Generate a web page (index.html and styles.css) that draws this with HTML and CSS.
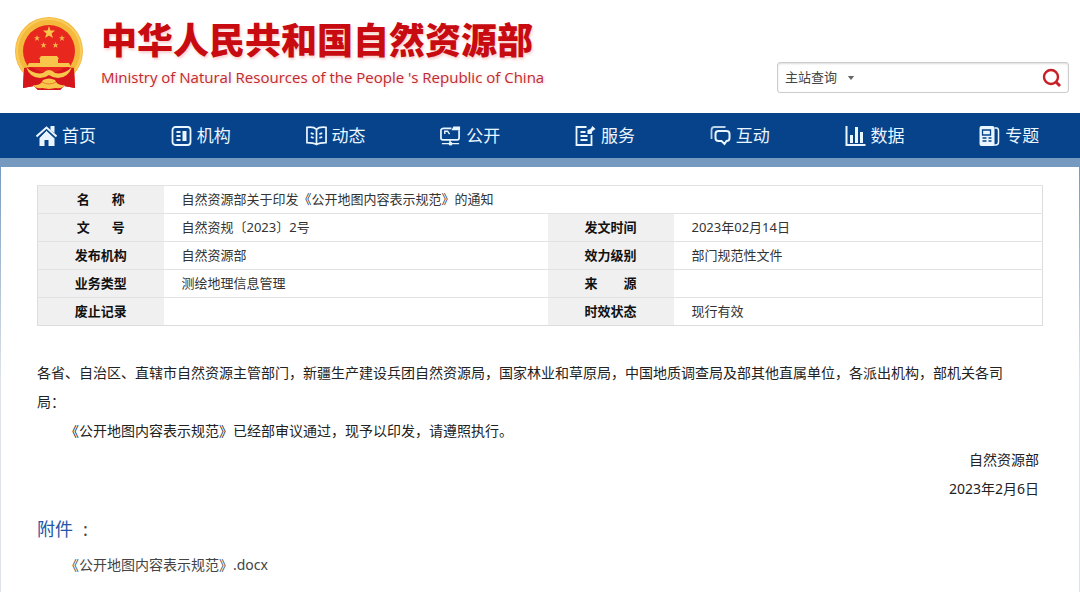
FILE: index.html
```html
<!DOCTYPE html>
<html lang="zh-CN">
<head>
<meta charset="utf-8">
<meta name="viewport" content="width=device-width, initial-scale=1">
<title>自然资源部关于印发《公开地图内容表示规范》的通知</title>
<link rel="stylesheet" href="styles.css">
</head>
<body>
<header class="header">
  <div class="brand">
    <svg class="emblem" viewBox="0 0 68 73" aria-hidden="true">
      <path d="M9 51 L8 71 L19 69 L23 73 H45 L49 69 L60 71 L59 51Z" fill="#d5161c"/>
      <circle cx="34" cy="34" r="34" fill="#f4b83c"/>
      <circle cx="34" cy="34" r="32" fill="none" stroke="#f9cd5c" stroke-width="2"/>
      <circle cx="34" cy="34" r="26" fill="#e8281f"/>
      <path d="M34 9 L35.500 13.500 H40 L36.500 16.500 L38 21 L34 18.500 L30 21 L31.500 16.500 L28 13.500 H32.500Z" fill="#f7c84c"/>
      <g fill="#f7b84c">
        <path id="star" d="M22 18 L22.800 20.200 H25 L23.200 21.600 L24 24 L22 22.600 L20 24 L20.800 21.600 L19 20.200 H21.200Z"/>
        <use href="#star" x="25"/>
        <use href="#star" x="6.500" y="7"/>
        <use href="#star" x="18.500" y="7"/>
      </g>
      <path d="M26 39 H42 L44 42 H43 V46 H54 L56 50 H12 L14 46 H25 V42 H24Z" fill="#f8c64b"/>
      <path d="M9 51 Q18 49 22 53 L34 58 L46 53 Q50 49 59 51 L60 71 L49 69 L45 73 H23 L19 69 L8 71Z" fill="#d5161c"/>
      <path d="M11 50 Q19 58 28 56 Q31 53 34 53 Q37 53 40 56 Q49 58 57 50 Q53 61 43 61 Q38 61 34 58 Q30 61 25 61 Q15 61 11 50Z" fill="#f8c64b"/>
      <path d="M18 68 Q26 69 28 63 Q34 60 40 63 Q42 69 50 68 Q47 72 41 71 L34 72 L27 71 Q21 72 18 68Z" fill="#f8c64b"/>
      <path d="M27 65 Q34 69 41 65" fill="none" stroke="#e7822b" stroke-width="1"/>
    </svg>
    <div>
      <h1 class="site-name">中华人民共和国自然资源部</h1>
      <p class="site-name-en">Ministry of Natural Resources of the People&nbsp;'s Republic of China</p>
    </div>
  </div>
  <form class="search">
    <select class="search-scope" aria-label="查询范围"><option>主站查询</option></select>
    <svg class="caret" viewBox="0 0 8 5" aria-hidden="true"><path d="M0 0 H8 L4 5Z" fill="#666"/></svg>
    <input class="search-text" type="text" aria-label="查询内容">
    <button class="search-button" type="button" aria-label="查询">
      <svg viewBox="0 0 20 20" width="20" height="20"><circle cx="9" cy="9" r="7" fill="none" stroke="#c81f26" stroke-width="2.400"/><path d="M14 14 L18 18" stroke="#c81f26" stroke-width="3"/></svg>
    </button>
  </form>
</header>

<nav class="nav">
  <a class="nav-link" href="#">
    <svg class="icon" viewBox="0 0 20 20"><path d="M10 4.500 L18 12 V20 H12 V14 H8 V20 H3 V12Z" fill="currentColor"/><path d="M0 10.500 L10 1.500 L20 10.500" fill="none" stroke="currentColor" stroke-width="2"/><path d="M14 0 H18 V7 L14 4Z" fill="currentColor"/><path d="M2 12 L10 4.500 L18 12" fill="none" stroke="#07438a" stroke-width=".8"/></svg>首页</a>
  <a class="nav-link" href="#">
    <svg class="icon" viewBox="0 0 20 20"><rect x="1" y="1" width="18" height="18" rx="3" fill="none" stroke="currentColor" stroke-width="1.800"/><path d="M5 6 H9 M5 10 H9 M5 14 H9" stroke="currentColor" stroke-width="2"/><path d="M11 5 H15 V15 H11Z" fill="currentColor"/></svg>机构</a>
  <a class="nav-link" href="#">
    <svg class="icon" viewBox="0 0 22 20"><path d="M11 3 Q8 0 1 1 V17 Q8 17 11 19 Q14 17 21 17 V1 Q14 0 11 3 V18" fill="none" stroke="currentColor" stroke-width="1.800"/><path d="M5 7 L8 8 M5 11 L8 12 M14 8 L17 7 M14 12 L17 11" stroke="currentColor" stroke-width="1.800"/></svg>动态</a>
  <a class="nav-link" href="#">
    <svg class="icon" viewBox="0 0 22 20"><path d="M12 2 H4 Q1 2 1 4 V12 Q1 14 3 14 H18 Q20 14 20 12 V4" fill="none" stroke="currentColor" stroke-width="1.800"/><path d="M12 4 L14 0 H21 V4Z" fill="currentColor"/><path d="M5 8 V5 H8 L10 8 M10.500 14 V17 M2 18 H20" fill="none" stroke="currentColor" stroke-width="1.500"/><circle cx="11" cy="18" r="2" fill="currentColor"/></svg>公开</a>
  <a class="nav-link" href="#">
    <svg class="icon" viewBox="0 0 20 20"><path d="M11 1 H1 V19 H16 V9" fill="none" stroke="currentColor" stroke-width="1.800"/><path d="M5 6 H10 M5 10 H12 M5 14 H12" stroke="currentColor" stroke-width="1.800"/><path d="M12 4 L15 3 L17 0 L20 3 L17 5 L16 8 L12 8Z" fill="currentColor"/></svg>服务</a>
  <a class="nav-link" href="#">
    <svg class="icon" viewBox="0 0 20 20"><path d="M1 13 V4 Q1 1 4 1 H15" fill="none" stroke="currentColor" stroke-width="1.800" opacity=".8"/><path d="M8 5 H16 Q19 5 19 8 V12 Q19 15 16 15 L14 18 L11 15 H8 Q5 15 5 12 V8 Q5 5 8 5Z" fill="none" stroke="currentColor" stroke-width="2"/></svg>互动</a>
  <a class="nav-link" href="#">
    <svg class="icon" viewBox="0 0 20 20"><path d="M1 0 V19 H20" fill="none" stroke="currentColor" stroke-width="2"/><path d="M6 9 V17 M11 1 V17 M16 6 V17" stroke="currentColor" stroke-width="3"/></svg>数据</a>
  <a class="nav-link" href="#">
    <svg class="icon" viewBox="0 0 20 20"><path d="M15 2 H17 Q19 2 19 5 V16 Q19 19 16 19 H4" fill="none" stroke="currentColor" stroke-width="1.500"/><rect x="0" y="0" width="15" height="20" rx="2" fill="currentColor"/><path d="M3 4 H11 V9 H3Z" fill="none" stroke="#07438a" stroke-width="1.300"/><path d="M3 12 H7 M3 15 H7 M9 12 H12 M9 15 H12" stroke="#07438a" stroke-width="1.300"/></svg>专题</a>
</nav>

<main class="page">
  <table class="info">
    <colgroup><col class="col-label"><col class="col-wide"><col class="col-label"><col></colgroup>
    <tr><th scope="row"><span class="pair"><span>名</span><span>称</span></span></th><td colspan="3">自然资源部关于印发《公开地图内容表示规范》的通知</td></tr>
    <tr><th scope="row"><span class="pair"><span>文</span><span>号</span></span></th><td>自然资规〔2023〕2号</td><th scope="row">发文时间</th><td>2023年02月14日</td></tr>
    <tr><th scope="row">发布机构</th><td>自然资源部</td><th scope="row">效力级别</th><td>部门规范性文件</td></tr>
    <tr><th scope="row">业务类型</th><td>测绘地理信息管理</td><th scope="row">来　　源</th><td></td></tr>
    <tr><th scope="row">废止记录</th><td></td><th scope="row">时效状态</th><td>现行有效</td></tr>
  </table>

  <article class="article">
    <p>各省、自治区、直辖市自然资源主管部门，新疆生产建设兵团自然资源局，国家林业和草原局，中国地质调查局及部其他直属单位，各派出机构，部机关各司<br>局：</p>
    <p class="indent">《公开地图内容表示规范》已经部审议通过，现予以印发，请遵照执行。</p>
    <p class="sign">自然资源部</p>
    <p class="sign">2023年2月6日</p>
  </article>

  <section class="files">
    <h2 class="files-title">附件<span class="colon">:</span></h2>
    <a class="file-link" href="#">《公开地图内容表示规范》.docx</a>
  </section>
</main>
</body>
</html>
```
FILE: styles.css
```css
* {
  box-sizing: border-box;
}

body {
  margin: 0;
  background: #fff;
  color: #222;
  font: 14px/29px "Noto Sans", "Noto Sans CJK SC", sans-serif;
}

h1, h2, p {
  margin: 0;
}

.header {
  display: flex;
  justify-content: space-between;
  align-items: flex-start;
  padding: 17px 11px 20px 15px;
}

.brand {
  display: flex;
  gap: 18px;
}

.emblem {
  width: 68px;
  height: 73px;
}

.site-name {
  color: #c70b10;
  font-size: 36px;
  font-weight: 900;
  line-height: 48px;
  text-shadow: 1px 2px 3px #f8cccc;
}

.site-name-en {
  color: #bd2b31;
  font-family: "Open Sans", "Noto Sans", sans-serif;
  font-size: 15px;
  line-height: 24px;
  text-shadow: 1px 1px 3px #f6cccc;
}

.search {
  display: flex;
  align-items: center;
  width: 292px;
  height: 31px;
  margin-top: 45px;
  padding: 0 6px 0 7px;
  border: 1px solid #ccc;
  border-radius: 3px;
  box-shadow: inset 0 1px 2px #ddd;
}

.search-scope,
.search-text,
.search-button {
  border: 0;
  padding: 0;
  background: none;
  font: inherit;
}

.search-scope {
  width: 62px;
  appearance: none;
  color: #444;
  font-size: 13px;
}

.caret {
  width: 8px;
  height: 4px;
}

.search-text {
  flex: 1;
  min-width: 0;
}

.search-button {
  display: flex;
}

.nav {
  display: grid;
  grid-template-columns: repeat(8, 1fr);
  padding-right: 2px;
  background: #07438a;
  border-bottom: 9px solid #7599bf;
}

.nav-link {
  display: flex;
  align-items: center;
  gap: 5px;
  padding-left: 36px;
  color: #e9f5ff;
  font-size: 17px;
  line-height: 45px;
  text-decoration: none;
}

.icon {
  width: 21px;
  height: 20px;
}

.page {
  padding: 18px 36px 9px;
  border: solid #dfe3e8;
  border-width: 0 1px;
  border-image: linear-gradient(#7599bf, #dfe3e8 50%) 1;
}

.info {
  width: 100%;
  table-layout: fixed;
  border: 1px solid #ddd;
  border-collapse: collapse;
  font-size: 13px;
  line-height: 27px;
}

.col-label {
  width: 126px;
}

.col-wide {
  width: 384px;
}

.info th,
.info td {
  height: 28px;
  padding: 0;
  border-top: 1px solid #e2e2e2;
}

.info th {
  background: #f0f0f0;
  color: #111;
}

.info td {
  padding-left: 18px;
  color: #333;
}

.pair {
  display: inline-flex;
  gap: 22px;
}

.article {
  margin-top: 32px;
}

.indent {
  text-indent: 2em;
}

.sign {
  padding-right: 4px;
  text-align: right;
}

.files {
  display: flex;
  flex-direction: column;
  align-items: flex-start;
  margin-top: 8px;
  line-height: 36px;
}

.files-title {
  color: #2656a5;
  font-size: 18px;
  font-weight: 400;
}

.colon {
  padding-left: 10px;
  color: #444;
}

.file-link {
  padding-left: 28px;
  color: #444;
  text-decoration: none;
}
```
